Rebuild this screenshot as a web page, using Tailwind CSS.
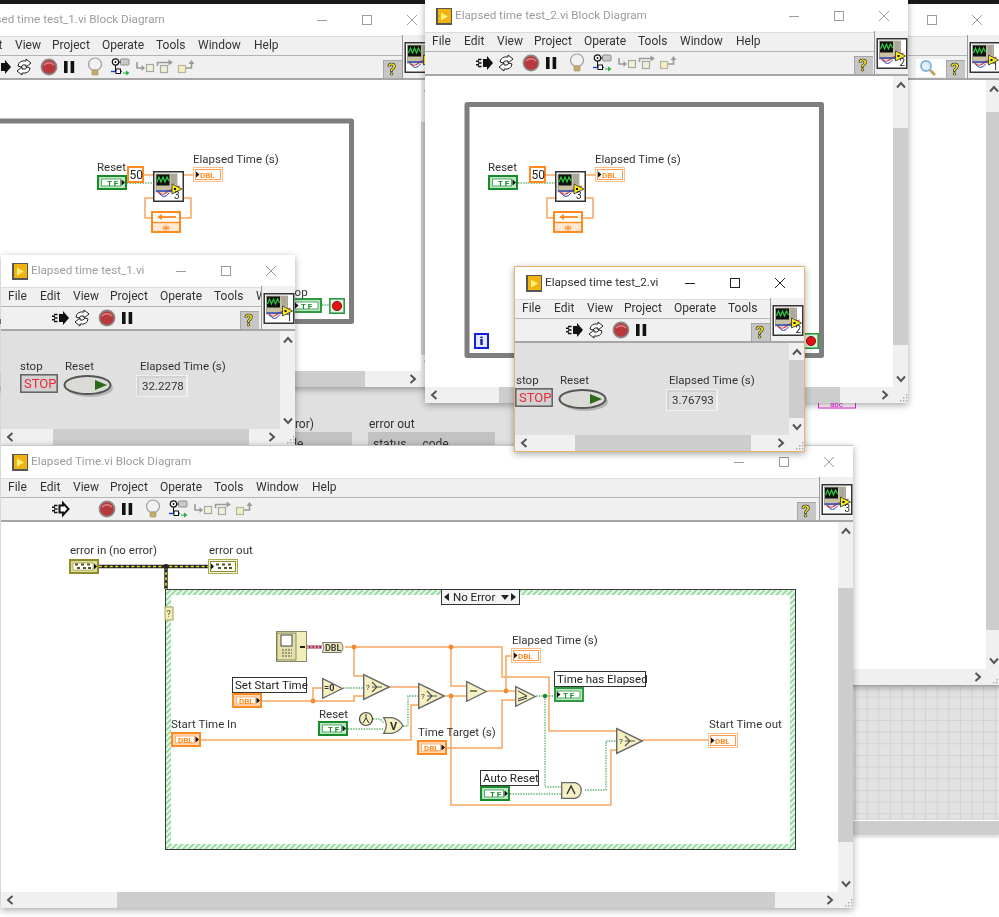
<!DOCTYPE html>
<html lang="en">

<head>
  <meta charset="UTF-8">
  <title>Elapsed Time VI windows</title>
  <script src="https://cdn.jsdelivr.net/npm/@tailwindcss/browser@4"></script>
</head>

<body class="bg-white overflow-hidden">
  <!-- shared shapes, placed with <use x y> in page coordinates -->
  <svg class="absolute w-0 h-0" aria-hidden="true">
    <defs>
      <pattern id="hatch" width="4" height="4" patternUnits="userSpaceOnUse" patternTransform="rotate(45)">
        <rect width="4" height="4" fill="#eef9ee" />
        <rect width="2" height="4" fill="#96dca2" />
      </pattern>

      <g id="logo">
        <rect width="16" height="17" fill="#565656" />
        <rect x="2" y="1" width="13" height="14" fill="#f0b30f" />
        <path d="M5 4.5 L12 8.5 L5 12.5 Z" fill="#fff07a" />
      </g>

      <g id="vi">
        <rect x="0.75" y="0.75" width="29.5" height="29.5" fill="#fff" stroke="#333" stroke-width="1.5" />
        <rect x="3" y="3" width="21" height="18" fill="#c9c2a2" stroke="#666" stroke-width=".5" />
        <rect x="3.5" y="3.5" width="13" height="11" fill="#111" />
        <path d="M4 11 L6 6 L8 11 L10 6 L12 11 L14 6 L16 10" fill="none" stroke="#2ecc40" stroke-width="1.2" />
        <rect x="18" y="4" width="5" height="9" fill="#aaa69a" />
        <path d="M5 21 Q10 26 15 20 L27 15" fill="none" stroke="#e0403a" stroke-width="1.2" />
        <path d="M3 20 H20" stroke="#2040c0" stroke-width="1.4" />
        <path d="M6 22 Q11 29 16 22" fill="none" stroke="#2040c0" stroke-width="1" />
        <path d="M19 13 L29 18 L19 23 Z" fill="#f3ea1c" stroke="#333" stroke-width=".8" />
        <rect x="21" y="17" width="2" height="2" fill="#111" />
      </g>

      <g id="run"><path d="M8 6 H12 V3 L18 10 L12 17 V14 H8 Z" fill="#111" />
        <path d="M3 6.5 H6.5 M3 10 H6.5 M3 13.5 H6.5 M1 8.2 H4 M1 11.8 H4" stroke="#111" stroke-width="1.5" /></g>
      <g id="runh"><path d="M8.5 6.5 H12 V4 L17.5 10 L12 16 V13.5 H8.5 Z" fill="#fff" stroke="#111" stroke-width="2" />
        <path d="M3 6.5 H6.5 M3 10 H6.5 M3 13.5 H6.5 M1 8.2 H4 M1 11.8 H4" stroke="#111" stroke-width="1.5" /></g>
      <g id="cycle" fill="none" stroke="#222" stroke-width="1">
        <path d="M4 9 Q5 3 12 4 V2 L17 6 L12 10 V8 Q8 7 7 10 Z" fill="#fff" />
        <path d="M16 11 Q15 17 8 16 V18 L3 14 L8 10 V12 Q12 13 13 10 Z" fill="#fff" />
      </g>
      <g id="stop">
        <circle cx="10" cy="10" r="7.6" fill="#b8383c" stroke="#8a8a8a" stroke-width="1.6" />
        <path d="M5 8 Q10 3.5 15 8" fill="none" stroke="#dc8484" stroke-width="1.4" />
      </g>
      <g id="pause"><rect x="5" y="4" width="3.6" height="12" fill="#111" /><rect x="11.6" y="4" width="3.6" height="12" fill="#111" /></g>
      <g id="bulb">
        <path d="M7 13 Q3.5 10.5 3.5 7.5 A6.5 6.5 0 0 1 16.5 7.5 Q16.5 10.5 13 13 Z" fill="#f2f2f2" stroke="#a0a0a0" stroke-width="1.2" />
        <rect x="7" y="13" width="6" height="5" rx="1" fill="#c7ad6a" stroke="#a08a50" stroke-width=".6" />
      </g>
      <g id="retain">
        <circle cx="5.5" cy="5" r="3.2" fill="#fff" stroke="#111" stroke-width="1.2" /><circle cx="5.5" cy="5" r="1" fill="#111" />
        <rect x="10.5" y="2" width="8.5" height="6" rx="1" fill="#c9c9c9" stroke="#8f8f8f" />
        <path d="M5.5 8 V14 M8 5 H10.5" stroke="#111" />
        <path d="M1 14.5 H12" stroke="#1a3fd0" stroke-width="1.4" />
        <rect x="6" y="12" width="4.5" height="4.5" fill="#fff" stroke="#111" />
        <path d="M13 15.5 H16 V13.5 L19.5 16 L16 18.5 V16.5 H13 Z" fill="#1faf3c" />
      </g>
      <g id="stepin">
        <path d="M2 5 V11 H8" fill="none" stroke="#9a9a9a" stroke-width="1.6" /><path d="M6.5 8 L10 11 L6.5 14 Z" fill="#9a9a9a" />
        <rect x="11.5" y="7.5" width="7" height="7" fill="#f2efd8" stroke="#a8a8a8" stroke-width="1.2" />
      </g>
      <g id="stepover">
        <rect x="5.5" y="8.5" width="7" height="7" fill="#f2efd8" stroke="#a8a8a8" stroke-width="1.2" />
        <path d="M2.5 9 V5.5 H14" fill="none" stroke="#9a9a9a" stroke-width="1.6" /><path d="M13.5 2.5 L18 5.5 L13.5 8.5 Z" fill="#9a9a9a" />
      </g>
      <g id="stepout">
        <rect x="2.5" y="8.5" width="7" height="7" fill="#f5f0c0" stroke="#b5b5a0" stroke-width="1.2" />
        <path d="M10 11 H15.5 V6" fill="none" stroke="#9a9a9a" stroke-width="1.6" /><path d="M12.5 7 L15.5 3 L18.5 7 Z" fill="#9a9a9a" />
      </g>

      <g id="dblC">
        <rect x="1" y="1" width="28" height="13" fill="#ffd9b5" stroke="#ff8a1f" stroke-width="2" />
        <rect x="4.5" y="4" width="19" height="7" fill="#fff" stroke="#ffb277" />
        <text x="7" y="11" class="text-[8px] font-bold" fill="#ff8a1f">DBL</text>
        <path d="M24.5 4.5 L28 7.5 L24.5 10.5 Z" fill="#111" />
      </g>
      <g id="dblI">
        <rect x=".5" y=".5" width="29" height="14" fill="#fff" stroke="#ffbd8a" />
        <rect x="2.5" y="2.5" width="25" height="10" fill="#fff" stroke="#ff9d52" />
        <path d="M3 4.5 L6.5 7.5 L3 10.5 Z" fill="#111" />
        <text x="7" y="11" class="text-[8px] font-bold" fill="#ff8a1f">DBL</text>
      </g>
      <g id="tfC">
        <rect x="1" y="1" width="28" height="13" fill="#bfe6c4" stroke="#178a2b" stroke-width="2" />
        <rect x="4.5" y="4" width="19" height="7" fill="#fff" stroke="#57ad67" />
        <text x="10" y="11" class="text-[8px] font-bold" fill="#178a2b">T F</text>
        <path d="M24.5 4.5 L28 7.5 L24.5 10.5 Z" fill="#111" />
      </g>
      <g id="tfI">
        <rect x="1" y="1" width="28" height="13" fill="#bfe6c4" stroke="#2f9a44" stroke-width="2" />
        <rect x="3" y="4" width="23" height="7" fill="#fff" stroke="#57ad67" />
        <path d="M3 4.5 L6.5 7.5 L3 10.5 Z" fill="#111" />
        <text x="9" y="11" class="text-[8px] font-bold" fill="#178a2b">T F</text>
      </g>
      <g id="errC">
        <rect x="1" y="1" width="28" height="13" fill="#dcdc9c" stroke="#8d8d2c" stroke-width="2" />
        <rect x="4" y="4" width="20" height="7" fill="#fff" stroke="#8d8d2c" stroke-width=".6" />
        <path d="M6 5.5 H9 M12 5.5 H15 M18 5.5 H21 M8 9 H11 M14 9 H17 M19 9 H22" stroke="#555522" stroke-width="2" />
        <path d="M25 4.5 L28 7.5 L25 10.5 Z" fill="#111" />
      </g>
      <g id="errI">
        <rect x=".5" y=".5" width="29" height="14" fill="#f7f7de" stroke="#a9a94e" />
        <rect x="2.5" y="2.5" width="25" height="10" fill="#fff" stroke="#8d8d2c" />
        <path d="M3 4.5 L6 7.5 L3 10.5 Z" fill="#111" />
        <path d="M8 5.5 H11 M14 5.5 H17 M20 5.5 H23 M10 9 H13 M16 9 H19 M21 9 H24" stroke="#555522" stroke-width="2" />
      </g>

      <g id="sel">
        <path d="M.7 .7 L26.3 13 L.7 25.3 Z" fill="#f6f1c3" stroke="#666" stroke-width="1.4" />
        <path d="M9 13 H19 M9 8 L14 13 L9 18" fill="none" stroke="#555" stroke-width="1.2" />
        <text x="3" y="16" class="text-[8px]" fill="#333">?</text>
      </g>
      <path id="tri" d="M.7 .7 L20.3 10.5 L.7 20.3 Z" fill="#f6f1c3" stroke="#666" stroke-width="1.3" />
      <path id="orgate" d="M.7 .7 H9 Q16 2 20 8.5 Q16 15 9 16.3 H.7 Q6 8.5 .7 .7 Z" fill="#f6f1c3" stroke="#666" stroke-width="1.3" />
      <path id="andgate" d="M.7 .7 H14 A8 8 0 0 1 14 16.3 H.7 Z" fill="#f6f1c3" stroke="#666" stroke-width="1.3" />

      <g id="feedback">
        <rect x="1" y="1" width="28" height="20" fill="#fff" stroke="#ff8a1f" stroke-width="2" />
        <rect x="2" y="12" width="26" height="8" fill="#ffe9d4" />
        <path d="M2 11.5 H28" stroke="#ff8a1f" stroke-width="1.4" />
        <path d="M10 6 H25" stroke="#ff8a1f" stroke-width="1.8" /><path d="M11 3 L6 6 L11 9 Z" fill="#ff8a1f" />
        <path d="M15 13.5 V20 M12 15 L18 19 M18 15 L12 19 M11.5 17 H18.5" stroke="#ff8a1f" stroke-width=".9" />
      </g>
      <g id="const50">
        <rect x="1" y="1" width="15" height="15" fill="#fff" stroke="#ff8a1f" stroke-width="2" />
        <text x="2.5" y="13" class="text-[12px]" fill="#222">50</text>
      </g>
      <g id="stopterm">
        <rect x=".8" y=".8" width="14.4" height="14.4" fill="#dff0e0" stroke="#2f9a44" stroke-width="1.6" />
        <circle cx="8" cy="8" r="4.6" fill="#e81010" stroke="#600" stroke-width=".8" />
      </g>
      <g id="iter">
        <rect x="1" y="1" width="13" height="14" fill="#e8e8ff" stroke="#1020e0" stroke-width="2" />
        <rect x="6.3" y="6" width="2.4" height="6" fill="#1020a0" /><rect x="6.3" y="3.6" width="2.4" height="1.6" fill="#1020a0" />
      </g>

      <g id="stopbtn">
        <rect x=".8" y=".8" width="36.4" height="17.4" fill="#d2d2d2" stroke="#666" stroke-width="1.6" />
        <text x="4" y="14" class="text-[13px]" fill="#f02838">STOP</text>
      </g>
      <g id="toggle">
        <ellipse cx="26" cy="13" rx="23" ry="9" fill="#8a8a8a" opacity=".5" />
        <ellipse cx="23.5" cy="10" rx="23" ry="9" fill="#dadad6" stroke="#555" stroke-width="2" />
        <path d="M31 5 L43 10 L31 15 Z" fill="#2c6a18" />
      </g>
      <g id="indicator">
        <rect width="52" height="22" fill="#f0f0f0" />
        <rect x="1" y="1" width="49" height="20" fill="#d2d2d2" />
        <rect x="3" y="3" width="47" height="18" fill="#dfdfdf" />
      </g>
      <g id="help">
        <rect width="19" height="18" fill="#c6c6c6" />
        <path d="M0 18 V0 H19" fill="none" stroke="#888" />
        <text x="4.5" y="15" class="text-[17px] font-bold" fill="#f5ea10" stroke="#333" stroke-width=".7">?</text>
      </g>
      <g id="magnifier">
        <circle cx="8" cy="7" r="5" fill="#dff0fb" stroke="#7fb2d8" stroke-width="1.8" />
        <path d="M12 11 L17 16" stroke="#c7a164" stroke-width="3" />
      </g>
    </defs>
  </svg>

  <div id="desk" class="relative w-[999px] h-[917px] overflow-hidden bg-white text-[12px] text-[#333] blur-[0.35px] font-['Roboto','Noto_Sans',sans-serif]">
    <div class="absolute left-0 top-0 w-full h-[4px] bg-[#1b1b1b]"></div>

    <!-- panels showing behind the windows -->
    <div class="absolute left-[200px] top-[380px] w-[400px] h-[70px] bg-[#e0e0e0]">
      <span class="absolute left-[68px] top-[35px]">no error)</span>
      <span class="absolute left-[169px] top-[35px]">error out</span>
      <div class="absolute left-[60px] top-[52px] w-[92px] h-[20px] bg-[#c2c2c2] pl-[17px] pt-[3px]">code</div>
      <div class="absolute left-[168px] top-[52px] w-[127px] h-[20px] bg-[#c2c2c2] flex gap-[16px] pl-[5px] pt-[3px]">
        <span>status</span><span>code</span>
      </div>
    </div>
    <div class="absolute left-[853px] top-[685px] w-[146px] h-[135px] bg-[#e2e2e2] bg-[linear-gradient(#d2d2d2_1px,transparent_1px),linear-gradient(90deg,#d2d2d2_1px,transparent_1px)] bg-[size:11.67px_11.67px] bg-[position:2px_0px]"></div>
    <div class="absolute left-[853px] top-[820px] w-[146px] h-[16px] bg-[#cdcdcd] border-t border-t-white border-b border-b-[#e4e4e4] shadow-[0_1px_3px_rgba(0,0,0,.2)]"></div>
  </div>

  <script>
    const desk = document.getElementById('desk');

    const chevrons = {
      up: '<svg width="10" height="8" class="shrink-0"><path d="M1 6.5 L5 2 L9 6.5" fill="none" stroke="#555" stroke-width="2"/></svg>',
      down: '<svg width="10" height="8" class="shrink-0"><path d="M1 1.5 L5 6 L9 1.5" fill="none" stroke="#555" stroke-width="2"/></svg>',
      left: '<svg width="8" height="10" class="shrink-0"><path d="M6.5 1 L2 5 L6.5 9" fill="none" stroke="#555" stroke-width="2"/></svg>',
      right: '<svg width="8" height="10" class="shrink-0"><path d="M1.5 1 L6 5 L1.5 9" fill="none" stroke="#555" stroke-width="2"/></svg>'
    };
    const grip = '<svg width="10" height="10"><path d="M8 1 h1.4 v1.4 h-1.4z M5 4 h1.4 v1.4 h-1.4z M8 4 h1.4 v1.4 h-1.4z M2 7 h1.4 v1.4 h-1.4z M5 7 h1.4 v1.4 h-1.4z M8 7 h1.4 v1.4 h-1.4z" fill="#aaa"/></svg>';

    const menuWidths = [
      ['File', 'w-[32px]'], ['Edit', 'w-[33px]'], ['View', 'w-[37px]'], ['Project', 'w-[50px]'],
      ['Operate', 'w-[54px]'], ['Tools', 'w-[42px]'], ['Window', 'w-[56px]'], ['Help', 'w-[30px]']
    ];

    // icon name + the gap in front of it, empty name keeps the slot free
    const diagramTools = [['run', ''], ['cycle', 'ml-[1px]'], ['stop', 'ml-[5px]'], ['pause', ''], ['bulb', 'ml-[6px]'], ['retain', 'ml-[5px]'], ['stepin', 'ml-[5px]'], ['stepover', ''], ['stepout', 'ml-[1px]']];
    const panelTools = diagramTools.slice(0, 4);
    const elapsedTools = [['runh', ''], ['', 'ml-[1px]']].concat(diagramTools.slice(2));

    function toolbarIcons(list) {
      return list.map(([name, gap]) => `<svg width="20" height="20" class="shrink-0 ${gap}">${name ? `<use href="#${name}"/>` : ''}</svg>`).join('');
    }

    function canvas(vx, vy, inner) {
      return `<svg width="1000" height="1000" viewBox="${vx} ${vy} 1000 1000" class="absolute left-0 top-0 text-[11.5px]">${inner}</svg>`;
    }

    function win(o) {
      const menu = o.noMenu ? '' : menuWidths.map(([label, w]) => `<span class="shrink-0 ${w}">${label}</span>`).join('');
      const titleText = o.active ? 'text-[#333]' : 'text-[#9c9c9c]';
      const btn = o.active ? '#222' : '#9c9c9c';
      desk.insertAdjacentHTML('beforeend', `
        <div class="absolute ${o.pos} flex flex-col ${o.frame} shadow-[0_2px_7px_rgba(0,0,0,.35)] bg-white">
          <div class="h-[32px] shrink-0 flex items-center bg-white pl-[11px]">
            <svg width="16" height="17" class="shrink-0"><use href="#logo"/></svg>
            <span class="ml-[3px] whitespace-nowrap text-[11.7px] ${titleText}">${o.title}</span>
            <div class="ml-auto flex pr-[2px]">
              <span class="w-[45px] flex justify-center"><svg width="12" height="12"><path d="M1 6.5 H11" stroke="${btn}"/></svg></span>
              <span class="w-[45px] flex justify-center"><svg width="12" height="12"><rect x="1.5" y="1.5" width="9" height="9" fill="none" stroke="${btn}"/></svg></span>
              <span class="w-[45px] flex justify-center"><svg width="12" height="12"><path d="M1 1 L11 11 M11 1 L1 11" stroke="${btn}"/></svg></span>
            </div>
          </div>
          <div class="relative shrink-0">
            <div class="h-[20px] flex items-center bg-[#f0f0f0] border-t border-t-[#dcdcdc] border-b border-b-[#b4b4b4] pl-[7px] pb-[3px] overflow-hidden">${menu}</div>
            <div class="h-[24px] flex items-center bg-[#f0f0f0] border-b-2 border-b-[#a6a6a6] pl-[50px]">${toolbarIcons(o.tools)}</div>
            <div class="absolute right-0 -top-[1px] bottom-0 w-[34px] bg-[#f0f0f0] border-l border-l-[#9a9a9a] border-b-2 border-b-[#a6a6a6]">
              <svg width="33" height="44" class="absolute left-0 top-0">
                <g transform="translate(1.5 7)"><use href="#vi"/><text x="23" y="28" class="text-[10px]" fill="#222">${o.num}</text></g>
              </svg>
            </div>
            <svg width="19" height="18" class="absolute ${o.help} top-[24px]"><use href="#help"/></svg>
            ${o.extra || ''}
          </div>
          <div class="relative flex-1 flex min-h-0">
            <div class="relative flex-1 overflow-hidden ${o.bg}">${o.body}</div>
            <div class="w-[15px] shrink-0 bg-[#f0f0f0] flex flex-col items-center">
              <div class="h-[17px] flex items-center">${chevrons.up}</div>
              <div class="flex-1 w-full min-h-0"><div class="${o.vThumb} w-full bg-[#cdcdcd]"></div></div>
              <div class="h-[17px] flex items-center">${chevrons.down}</div>
            </div>
          </div>
          <div class="h-[16px] shrink-0 bg-[#f0f0f0] flex items-center">
            <div class="w-[17px] flex justify-center">${chevrons.left}</div>
            <div class="flex-1 h-full min-w-0"><div class="${o.hThumb} h-full bg-[#cdcdcd]"></div></div>
            <div class="w-[17px] flex justify-center">${chevrons.right}</div>
            <div class="w-[15px] flex justify-end items-end h-full">${grip}</div>
          </div>
        </div>`);
    }

    const label = (x, y, s) => `<text x="${x}" y="${y + 4}" fill="#333">${s}</text>`;
    const boxed = (x, y, w, s) => `<rect x="${x + .5}" y="${y + .5}" width="${w}" height="15" fill="#fff" stroke="#333"/><text x="${x + 3}" y="${y + 12}" fill="#222">${s}</text>`;
    const use = (id, x, y) => `<use href="#${id}" x="${x}" y="${y}"/>`;
    const wires = (list, attrs) => `<g fill="none" ${attrs}>${list.map(p => `<polyline points="${p}"/>`).join('')}</g>`;
    const dot = (x, y, c) => `<circle cx="${x}" cy="${y}" r="2.4" fill="${c}"/>`;
    const ORANGE = 'stroke="#f8a660" stroke-width="1.5"';
    const GREEN = 'stroke="#5fb070" stroke-width="1.4" stroke-dasharray="1.4 1.2"';

    // fx, fy: top left of the Elapsed Time subVI; tfX: left of the Reset terminal
    const smallDiagram = (fx, fy, tfX) => `
      ${label(tfX, fy - 4, 'Reset')}
      ${wires([`${tfX + 30},${fy + 12} ${fx},${fy + 12}`], GREEN)}
      ${use('tfC', tfX, fy + 4)}
      ${use('const50', fx - 26, fy - 5)}
      ${wires([`${fx - 9},${fy + 4} ${fx},${fy + 4}`, `${fx + 31},${fy + 4} ${fx + 40},${fy + 4}`, `${fx - 2},${fy + 47} ${fx - 8},${fy + 47} ${fx - 8},${fy + 27} ${fx},${fy + 27}`, `${fx + 28},${fy + 47} ${fx + 38},${fy + 47} ${fx + 38},${fy + 27} ${fx + 31},${fy + 27}`], ORANGE)}
      ${use('vi', fx, fy)}<text x="${fx + 21}" y="${fy + 28}" class="text-[10px]" fill="#222">3</text>
      ${label(fx + 40, fy - 12, 'Elapsed Time (s)')}
      ${use('dblI', fx + 40, fy - 4)}
      ${use('feedback', fx - 2, fy + 40)}`;

    // Elapsed time test_1.vi Block Diagram, left window in the back
    const windowADiagram = `
      <path d="M-60 121 H351.5 V321.5 H-60" fill="none" stroke="#7e7e7e" stroke-width="5" stroke-linejoin="round"/>
      ${smallDiagram(153, 171, 97)}
      ${label(285, 292, 'stop')}
      ${use('tfI', 292, 298)}
      ${wires(['322,305 329,305'], GREEN)}
      ${use('stopterm', 329, 298)}`;

    // window behind everything on the right
    win({
      pos: 'left-[600px] top-[4px] w-[401px] h-[681px]', frame: '', title: '', num: '1', noMenu: true, help: 'right-[36px]',
      tools: [], bg: 'bg-white', vThumb: 'mt-[15px] h-[518px]', hThumb: 'ml-[20px] w-[100px]',
      extra: '<div class="absolute left-[316px] top-[23px] w-[30px] h-[18px] bg-white"><svg width="18" height="18" class="absolute left-[2px] top-0"><use href="#magnifier"/></svg></div>',
      body: canvas(600, 80, '<rect x="818.5" y="395" width="37" height="13" fill="#fff" stroke="#f020e0"/><text x="830" y="407" class="text-[8px]" fill="#f020e0">abc</text>')
    });

    win({
      pos: 'left-[-57px] top-[4px] w-[493px] h-[383px]', frame: '', title: 'Elapsed time test_1.vi Block Diagram', num: '1', help: 'right-[34px]',
      tools: diagramTools, bg: 'bg-white', vThumb: 'mt-[25px] h-[233px]', hThumb: 'ml-[180px] w-[225px]',
      body: canvas(-57, 80, windowADiagram)
    });

    win({
      pos: 'left-[1px] top-[255px] w-[294px] h-[190px]', frame: '', title: 'Elapsed time test_1.vi', num: '1', help: 'right-[36px]',
      tools: panelTools, bg: 'bg-[#e0e0e0]', vThumb: 'h-0', hThumb: 'ml-[35px] w-[196px]',
      body: canvas(1, 331, `
        ${label(20, 366, 'stop')}${use('stopbtn', 20, 374)}
        ${label(65, 366, 'Reset')}${use('toggle', 64, 375)}
        ${label(140, 366, 'Elapsed Time (s)')}${use('indicator', 136, 375)}
        <text x="142" y="390" fill="#333">32.2278</text>`)
    });

    win({
      pos: 'left-[425px] top-0 w-[483px] h-[403px]', frame: 'z-[1]', title: 'Elapsed time test_2.vi Block Diagram', num: '2', help: 'right-[35px]',
      tools: diagramTools, bg: 'bg-white', vThumb: 'mt-[35px] h-[217px]', hThumb: 'ml-[57px] w-[341px]',
      body: canvas(425, 76, `
        <path d="M467 355.5 V104.5 H821.5 V355.5 Z" fill="none" stroke="#7e7e7e" stroke-width="5" stroke-linejoin="round"/>
        ${smallDiagram(555, 171, 488)}
        ${use('iter', 474, 333)}
        ${use('stopterm', 803, 333)}`)
    });

    win({
      pos: 'left-[514px] top-[266px] w-[291px] h-[186px]', frame: 'z-[2] border border-[#e8b26e]', title: 'Elapsed time test_2.vi', num: '2', active: true, help: 'right-[34px]',
      tools: panelTools, bg: 'bg-[#e0e0e0]', vThumb: 'mt-0 h-[58px]', hThumb: 'ml-[43px] w-[176px]',
      body: canvas(515, 344, `
        ${label(516, 381, 'stop')}${use('stopbtn', 515, 389)}
        ${label(560, 381, 'Reset')}${use('toggle', 559, 390)}
        ${label(669, 381, 'Elapsed Time (s)')}${use('indicator', 666, 390)}
        <text x="672" y="405" fill="#333">3.76793</text>`)
    });

    // Elapsed Time.vi Block Diagram, main diagram
    const elapsedDiagram = `
      ${label(70, 549, 'error in (no error)')}
      ${label(209, 549, 'error out')}
      ${use('errC', 69, 558)}
      ${use('errI', 208, 558)}
      <g fill="none"><polyline points="99,565.5 208,565.5" stroke="#222" stroke-width="3.4"/><polyline points="166,565.5 166,588" stroke="#222" stroke-width="3.4"/>
      <polyline points="99,565.5 208,565.5" stroke="#e6de20" stroke-width="1.6" stroke-dasharray="3 2.4"/><polyline points="166,565.5 166,588" stroke="#e6de20" stroke-width="1.6" stroke-dasharray="3 2.4"/></g>
      ${dot(166, 565.5, '#222')}

      <rect x="165.5" y="588.5" width="630" height="260" fill="url(#hatch)" stroke="#3a3a3a"/>
      <rect x="171" y="594" width="619" height="249" fill="#fff"/>
      <rect x="165" y="606" width="8" height="13" fill="#f5eeb0" stroke="#a5a05a"/>
      <text x="166.5" y="616" class="text-[9px]" fill="#555">?</text>
      <rect x="441.5" y="588.5" width="78" height="15" fill="#f4f4f4" stroke="#333"/>
      <path d="M449 592 L444 596 L449 600 Z M511 592 L516 596 L511 600 Z M501 594 H509 L505 599 Z" fill="#222"/>
      <text x="453" y="600" fill="#222">No Error</text>

      ${wires([
        '345,646 502,646 502,676 549,676 549,730 617,730',
        '354,646 354,675 364,675',
        '262,700 354,700 354,695 364,695',
        '313,700 313,687 322,687',
        '390,686 418,686',
        '445,695 466,695',
        '451,646 451,685 466,685',
        '451,695 451,804 611,804 611,749 617,749',
        '487,690 515,690',
        '506,690 506,655 511,655',
        '447,747 502,747 502,699 515,699',
        '201,739 411,739 411,704 418,704',
        '642,739 708,739'
      ], ORANGE)}
      ${wires([
        '343,687 363,687',
        '348,728 384,728',
        '373,718 380,718 384,722',
        '403,725 408,725 408,695 418,695',
        '536,695 554,695',
        '545,695 545,786 561,786',
        '510,793 561,793',
        '585,789 606,789 606,740 617,740'
      ], GREEN)}
      ${dot(354, 646, '#f5882a')}${dot(451, 646, '#f5882a')}${dot(313, 700, '#f5882a')}${dot(451, 695, '#f5882a')}${dot(506, 690, '#f5882a')}
      <circle cx="545" cy="695" r="2.2" fill="#1c8a38"/>

      <rect x="276.5" y="630.5" width="30" height="30" fill="#f2eebc" stroke="#8a8a60"/>
      <rect x="277" y="632" width="19" height="27" fill="#e4e0a8" stroke="#66664a" stroke-width=".7"/>
      <rect x="281" y="634" width="11" height="11" fill="#fff" stroke="#444"/>
      <path d="M282 649 H292 M282 652 H292 M282 655 H292" stroke="#555" stroke-dasharray="2 1"/>
      <path d="M300 646 H305" stroke="#222" stroke-width="2"/>
      <path d="M307 646 H322" stroke="#a02848" stroke-width="3"/><path d="M307 646 H322" stroke="#fff" stroke-width="1" stroke-dasharray="2 1.5"/>
      <path d="M322.5 641.5 H341 Q345 646.5 341 651.5 H322.5 Q325 646.5 322.5 641.5 Z" fill="#ece7b5" stroke="#777"/>
      <text x="325" y="650" class="text-[9px] font-bold" fill="#444">DBL</text>

      ${boxed(232, 676, 74, 'Set Start Time')}
      ${use('dblC', 232, 692)}
      ${use('tri', 322, 677)}<text x="324" y="690" class="text-[9px] font-bold" fill="#333">=0</text>
      ${use('sel', 363, 673)}
      ${use('sel', 418, 682)}
      ${label(319, 713, 'Reset')}
      ${use('tfC', 318, 720)}
      <circle cx="366" cy="718" r="6.5" fill="#f2eebc" stroke="#444" stroke-width="1.2"/>
      <path d="M366 713 V718 M363 722 L366 717 L369 722" fill="none" stroke="#333"/>
      ${use('orgate', 383, 716)}<text x="390" y="729" class="text-[11px] font-bold" fill="#333">V</text>
      ${label(171, 723, 'Start Time In')}
      ${use('dblC', 171, 731)}
      ${label(418, 731, 'Time Target (s)')}
      ${use('dblC', 417, 739)}
      ${use('tri', 466, 680)}<path d="M470 690 H477" stroke="#333" stroke-width="1.2"/>
      ${use('tri', 515, 685)}<path d="M518 690 L527 695 L518 698 M518 700 L527 697" fill="none" stroke="#333"/>
      ${label(512, 639, 'Elapsed Time (s)')}
      ${use('dblI', 511, 647)}
      ${boxed(554, 670, 91, 'Time has Elapsed')}
      ${use('tfI', 554, 686)}
      ${use('sel', 616, 727)}
      ${label(709, 723, 'Start Time out')}
      ${use('dblI', 708, 732)}
      ${boxed(480, 769, 58, 'Auto Reset')}
      ${use('tfC', 480, 785)}
      ${use('andgate', 561, 781)}<path d="M567 793 L571 785 L575 793" fill="none" stroke="#333" stroke-width="1.4"/>`;

    win({
      pos: 'left-[1px] top-[445px] w-[852px] h-[463px]', frame: 'z-[1] border-t border-[#c8c8c8]', title: 'Elapsed Time.vi Block Diagram', num: '3', help: 'right-[37px]',
      tools: elapsedTools, bg: 'bg-white', vThumb: 'mt-[49px] h-[254px]', hThumb: 'ml-[99px] w-[658px]',
      body: canvas(1, 521, elapsedDiagram)
    });
  </script>
</body>

</html>
